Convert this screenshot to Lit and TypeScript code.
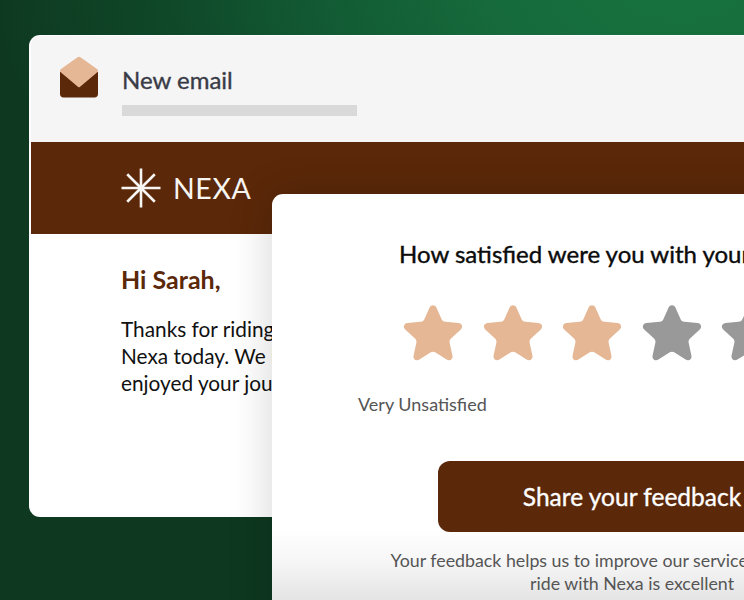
import { LitElement, html, css, svg } from "lit";
import { customElement } from "lit/decorators.js";

const starPath =
  "M24.6 2.6C26-.4 30-.4 31.4 2.6L36.5 14C37 15.6 38.5 16.6 40.5 16.8L53.5 18C57 18.4 58.3 22 55.8 24.4L46 33.4C44.8 34.5 44.3 36 44.6 37.6L47.4 50.4C48.2 54.2 44.8 56.4 41.6 54.6L30.6 47.6C29 46.6 27 46.6 25.4 47.6L14.4 54.6C11.2 56.4 7.8 54.2 8.6 50.4L11.4 37.6C11.7 36 11.2 34.5 10 33.4L.2 24.4C-2.3 22-1 18.4 2.5 18L15.5 16.8C17.5 16.6 19 15.6 19.5 14Z";

const rays = [0, 45, 90, 135];

@customElement("app-root")
export class AppRoot extends LitElement {
  static styles = css`
    :host {
      display: block;
      font-family: "Lato", "Noto Sans", sans-serif;
    }
    .stage {
      position: relative;
      width: 744px;
      height: 600px;
      overflow: hidden;
      box-sizing: border-box;
      padding: 35px 0 0 29px;
      background: radial-gradient(700px 400px at 680px -20px, #17733f 0%, #166a3c 28%, #125a33 52%, #0f4628 76%, #0e3820 100%);
    }
    .mail {
      width: 900px;
      height: 482px;
      box-sizing: border-box;
      background: #fff;
      border-radius: 11px 0 0 11px;
      padding: 1px 0 0 2px;
      overflow: hidden;
      display: flex;
      flex-direction: column;
    }
    .mail-head {
      height: 106px;
      box-sizing: border-box;
      background: #f5f5f5;
      border-top-left-radius: 9px;
      padding: 20px 0 0 28px;
      display: flex;
      gap: 23px;
      flex: none;
    }
    .head-text {
      display: flex;
      flex-direction: column;
      padding-top: 9px;
    }
    .subject {
      font-size: 24px;
      line-height: 30px;
      color: #393b47;
      -webkit-text-stroke: 0.35px #393b47;
    }
    .bar {
      width: 235px;
      height: 11px;
      margin-top: 10px;
      background: #d9d9d9;
    }
    .brand {
      height: 92px;
      flex: none;
      background: #5b2809;
      display: flex;
      align-items: center;
      gap: 12px;
      padding: 0 0 0 90px;
      color: #f7f5f2;
    }
    .brand-name {
      font-size: 28.5px;
      font-weight: 400;
      letter-spacing: 0.6px;
      line-height: 32px;
    }
    .mail-body {
      padding: 31px 0 0 90px;
      color: #111;
    }
    .hello {
      font-size: 25px;
      line-height: 28px;
      font-weight: 700;
      color: #5b2809;
    }
    .mail-body p {
      margin: 22px 0 0;
      width: 330px;
      font-size: 20.8px;
      line-height: 27px;
      white-space: pre-line;
    }
    .card {
      position: absolute;
      left: 272px;
      top: 194px;
      width: 720px;
      height: 520px;
      box-sizing: border-box;
      border-radius: 11px 11px 0 0;
      background: linear-gradient(#fff 0, #fff 334px, #f7f7f7 366px, #e4e4e4 406px, #e4e4e4 100%);
      box-shadow: -4px 0 40px rgba(0, 0, 0, 0.15);
      padding-top: 44px;
      display: flex;
      flex-direction: column;
      align-items: center;
    }
    h2 {
      margin: 0;
      padding-left: 8px;
      font-size: 24px;
      line-height: 32px;
      font-weight: 400;
      color: #0b0b0b;
      white-space: nowrap;
      -webkit-text-stroke: 0.4px #0b0b0b;
    }
    .stars {
      display: flex;
      gap: 21.6px;
      margin-top: 34px;
    }
    .stars svg {
      display: block;
      width: 58px;
      height: 58px;
      overflow: visible;
    }
    .on { fill: #e5b795; }
    .off { fill: #999; }
    .scale {
      align-self: stretch;
      margin: 30px 60px 0 86px;
      display: flex;
      justify-content: space-between;
      font-size: 18px;
      line-height: 24px;
      color: #555;
    }
    .cta {
      margin-top: 45px;
      width: 388px;
      height: 71px;
      border-radius: 12px;
      border: none;
      background: #5b2809;
      color: #fff;
      font: 400 24.5px "Lato", "Noto Sans", sans-serif;
      -webkit-text-stroke: 0.35px #fff;
      padding: 0;
    }
    .note {
      margin: 17px 0 0;
      width: 560px;
      text-align: center;
      font-size: 17.8px;
      line-height: 23px;
      color: #555;
    }
  `;

  private star(on: boolean) {
    return html`<svg viewBox="-1 -1 58 58" aria-hidden="true">
      <path class=${on ? "on" : "off"} d=${starPath}></path>
    </svg>`;
  }

  render() {
    return html`
      <div class="stage">
        <section class="mail">
          <header class="mail-head">
            <svg width="40" height="42" viewBox="0 0 40 42" aria-hidden="true">
              <path fill="#5b2809" d="M1 16H39V38C39 40 37.6 41.5 35.6 41.5H4.4C2.4 41.5 1 40 1 38Z"></path>
              <path fill="#e5b795" d="M18.2 1.4C19.3.6 20.7.6 21.8 1.4L38 13C39.4 14 39.4 15.6 38 16.6L20.8 30.9C20.3 31.3 19.7 31.3 19.2 30.9L2 16.6C.6 15.6.6 14 2 13Z"></path>
            </svg>
            <div class="head-text">
              <div class="subject">New email</div>
              <div class="bar"></div>
            </div>
          </header>
          <div class="brand">
            <svg width="40" height="40" viewBox="-20 -20 40 40" aria-hidden="true">
              ${rays.map(
                (a) => svg`<line x1="-19.5" y1="0" x2="19.5" y2="0" stroke="#f7f5f2" stroke-width="2.6" transform="rotate(${a})"></line>`
              )}
            </svg>
            <div class="brand-name">NEXA</div>
          </div>
          <div class="mail-body">
            <div class="hello">Hi Sarah,</div>
            <p>Thanks for riding with
Nexa today. We hope you
enjoyed your journey.</p>
          </div>
        </section>
        <section class="card">
          <h2>How satisfied were you with your ride today?</h2>
          <div class="stars">
            ${[true, true, true, false, false, false].map((on) => this.star(on))}
          </div>
          <div class="scale"><span>Very Unsatisfied</span><span>Very Satisfied</span></div>
          <button class="cta">Share your feedback</button>
          <p class="note">Your feedback helps us to improve our service to ensure every<br />ride with Nexa is excellent</p>
        </section>
      </div>
    `;
  }
}
